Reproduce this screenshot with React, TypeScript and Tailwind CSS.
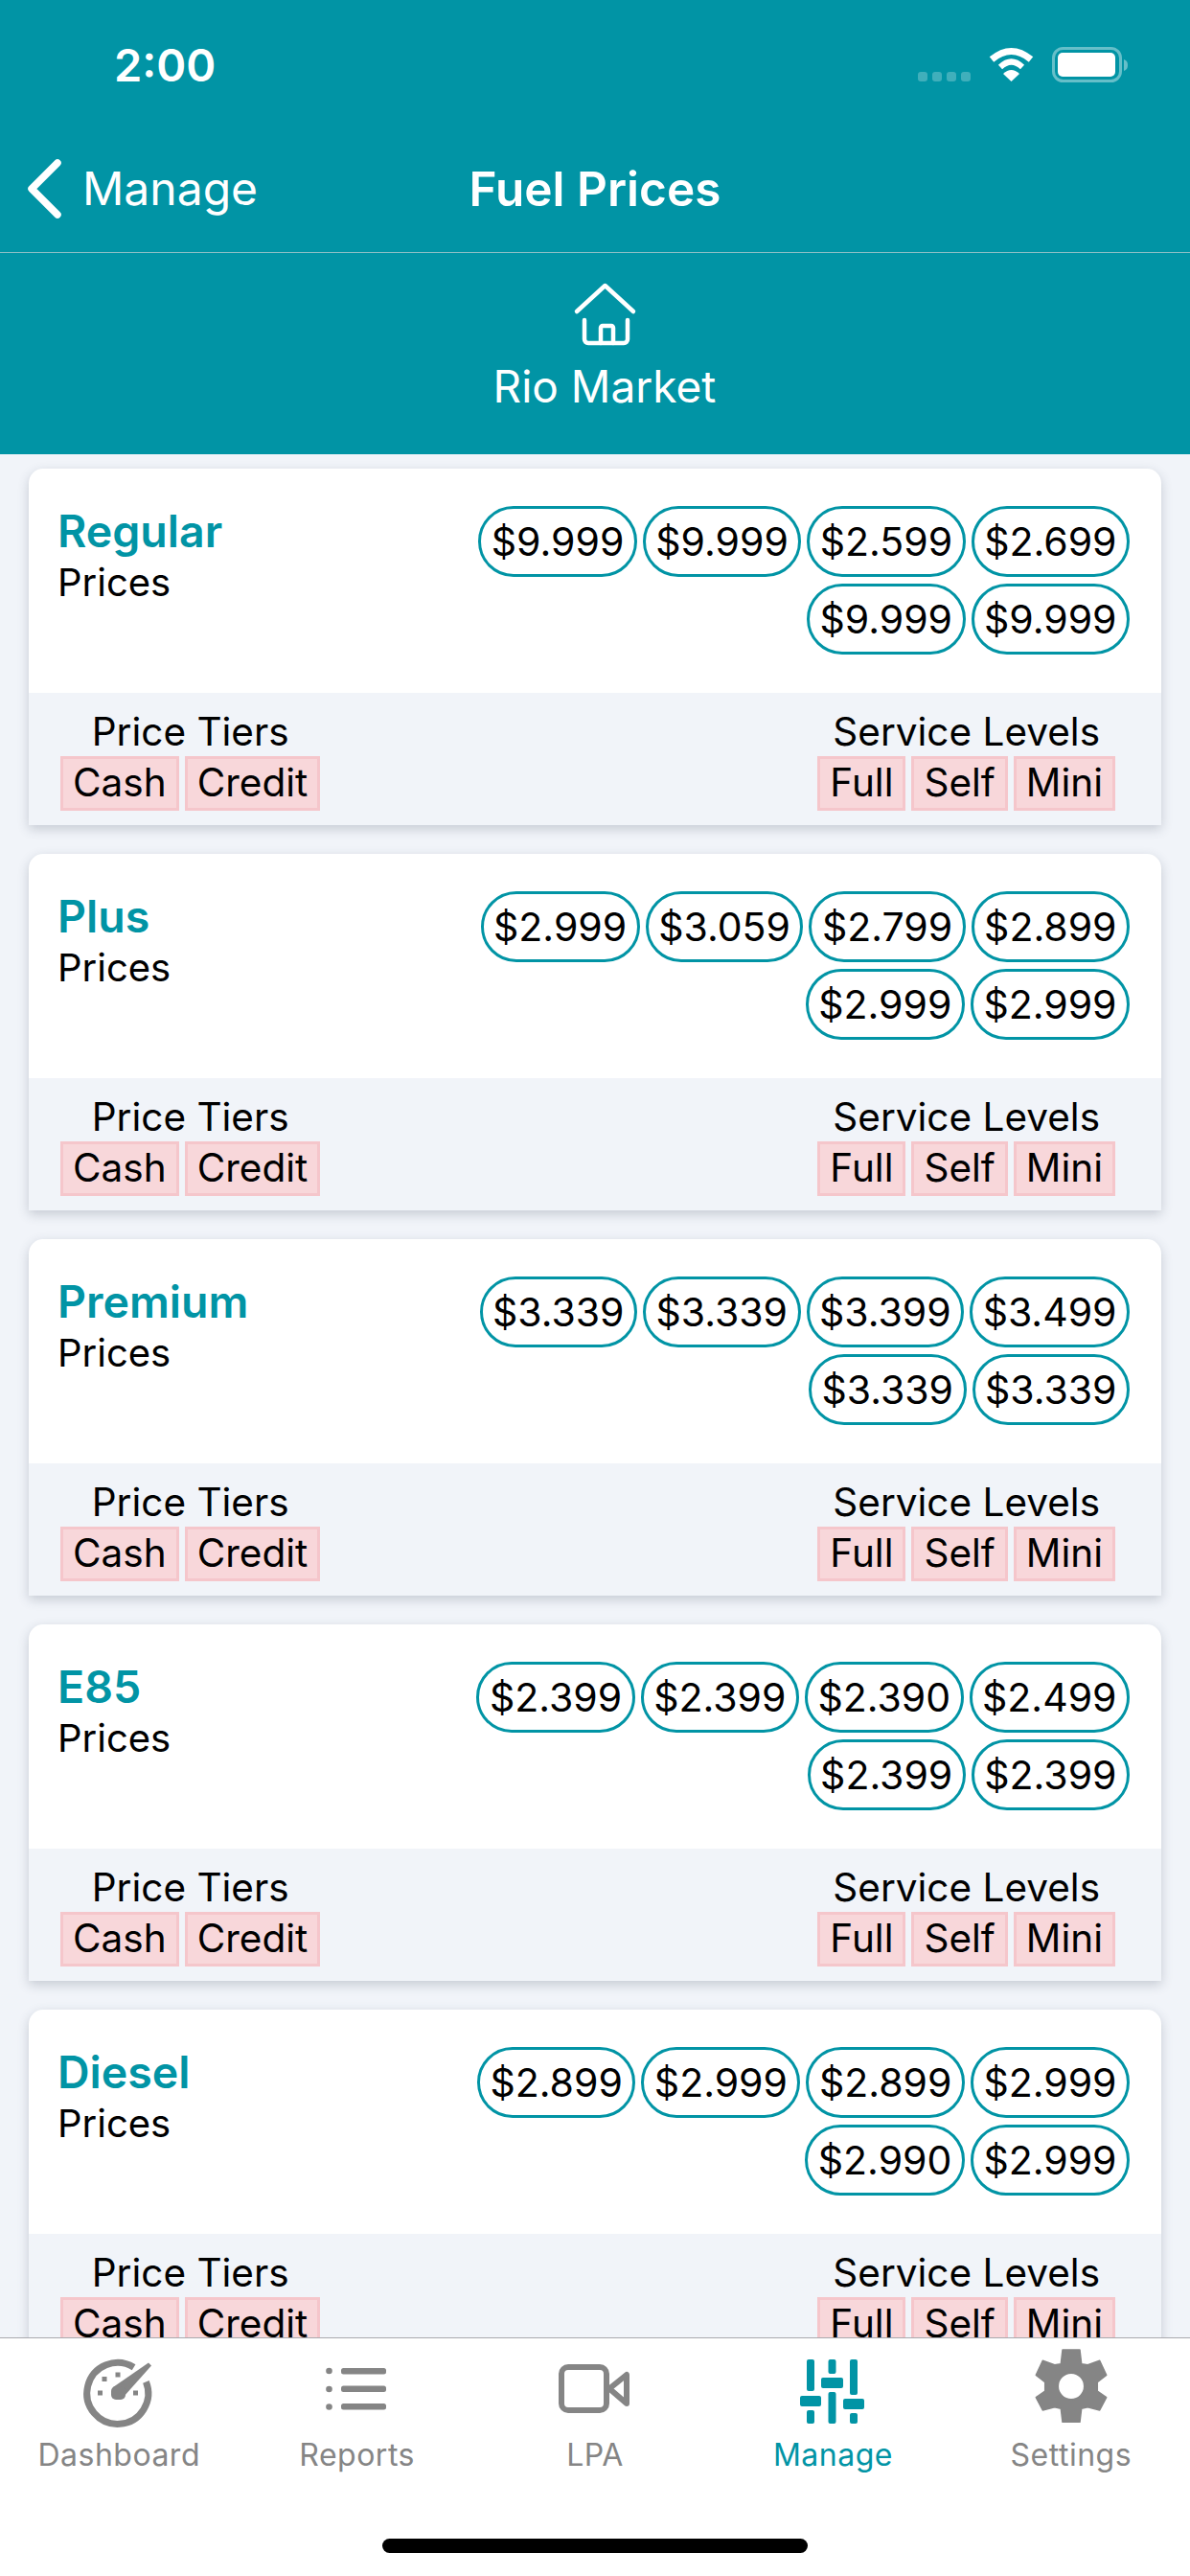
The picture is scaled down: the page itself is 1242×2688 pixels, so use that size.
import type { ReactNode } from "react";

function Pill({ v }: { v: string }) {
  return (
    <span className="h-[74px] rounded-[37px] border-[3px] border-[#0194a5] px-[10.5px] flex items-center justify-center text-[41px] text-black leading-none">
      {v}
    </span>
  );
}

function Chip({ t }: { t: string }) {
  return (
    <span className="h-[57px] border-[3px] border-[#f5c6cb] bg-[#f8d7da] px-[10px] flex items-center text-[40.5px] text-black leading-none">
      {t}
    </span>
  );
}

function Group({ title, items }: { title: string; items: string[] }) {
  return (
    <div className="flex flex-col items-center">
      <div className="text-[40.5px] leading-[50px] text-black">{title}</div>
      <div className="flex gap-[6px]">
        {items.map((i) => (
          <Chip key={i} t={i} />
        ))}
      </div>
    </div>
  );
}

function Card({ name, prices }: { name: string; prices: string[] }) {
  return (
    <div className="mx-[30px] mb-[30px] shrink-0 rounded-t-[15px] bg-white shadow-[0_4px_12px_rgba(60,70,90,0.24)] overflow-hidden">
      <div className="h-[234px] flex justify-between pl-[30px] pr-[33px]">
        <div className="pt-[40px]">
          <div className="text-[46.5px] leading-[50px] font-semibold text-[#0194a5]">{name}</div>
          <div className="text-[40px] leading-[50px] text-black mt-[4px]">Prices</div>
        </div>
        <div className="w-[690px] h-fit mt-[39px] flex flex-wrap justify-end gap-x-[6px] gap-y-[7px]">
          {prices.map((v, i) => (
            <Pill key={i} v={v} />
          ))}
        </div>
      </div>
      <div className="h-[138px] bg-[#f1f4f9] flex justify-between items-start pl-[33px] pr-[48px] pt-[16px]">
        <Group title="Price Tiers" items={["Cash", "Credit"]} />
        <Group title="Service Levels" items={["Full", "Self", "Mini"]} />
      </div>
    </div>
  );
}

const cards = [
  { name: "Regular", prices: ["$9.999", "$9.999", "$2.599", "$2.699", "$9.999", "$9.999"] },
  { name: "Plus", prices: ["$2.999", "$3.059", "$2.799", "$2.899", "$2.999", "$2.999"] },
  { name: "Premium", prices: ["$3.339", "$3.339", "$3.399", "$3.499", "$3.339", "$3.339"] },
  { name: "E85", prices: ["$2.399", "$2.399", "$2.390", "$2.499", "$2.399", "$2.399"] },
  { name: "Diesel", prices: ["$2.899", "$2.999", "$2.899", "$2.999", "$2.990", "$2.999"] },
];

function Tab({ label, active, children }: { label: string; active?: boolean; children: ReactNode }) {
  return (
    <div className="flex-1 flex flex-col items-center">
      <svg width="100" height="90" viewBox="0 0 100 90" className="shrink-0">
        {children}
      </svg>
      <div className={`text-[32px] leading-[40px] tracking-[0.5px] mt-[2px] ${active ? "text-[#0194a5]" : "text-[#858585]"}`}>{label}</div>
    </div>
  );
}

const half = "9,-38 10.7,-23.3 17.3,-22.3 29.7,-26.7 36.7,-11.7 27.3,-4.3 27.3,5 36.7,11.7 29.7,25 17.3,21.7 10.7,23.3 9,37.3 -9,37.3 -10.7,23.3 -17.3,21.7 -29.7,25 -36.7,11.7 -27.3,5 -27.3,-4.3 -36.7,-11.7 -29.7,-26.7 -17.3,-22.3 -10.7,-23.3 -9,-38";

export default function App() {
  return (
    <div className="w-[1242px] h-[2688px] flex flex-col bg-[#f1f4f9] overflow-hidden font-['Inter',sans-serif]">
      <header className="h-[474px] shrink-0 bg-[#0194a5] text-white flex flex-col">
        <div className="h-[132px] relative shrink-0">
          <span className="absolute left-[119px] top-[44px] text-[47px] leading-[48px] font-semibold">2:00</span>
          <svg className="absolute left-[950px] top-[40px]" width="235" height="55" viewBox="0 0 235 55">
            <g fill="#ffffff" fillOpacity="0.25">
              <rect x="8" y="35" width="10" height="10" rx="3" />
              <rect x="23" y="35" width="10" height="10" rx="3" />
              <rect x="38" y="35" width="10" height="10" rx="3" />
              <rect x="53" y="35" width="10" height="10" rx="3" />
            </g>
            <path d="M85 22Q105.5 5 126 22" stroke="#fff" strokeWidth="7" fill="none" />
            <path d="M94 30Q105.5 19 117 30" stroke="#fff" strokeWidth="6" fill="none" />
            <path d="M105.5 45L97 37Q105.5 29 114 37Z" fill="#fff" />
            <rect x="149.5" y="10.5" width="70" height="34" rx="10" stroke="#fff" strokeOpacity="0.4" strokeWidth="3" fill="none" />
            <rect x="154" y="15" width="60" height="25" rx="5" fill="#fff" />
            <path d="M223 22C226 23 227 25 227 28C227 31 226 33 223 34Z" fill="#fff" fillOpacity="0.4" />
          </svg>
        </div>
        <div className="h-[132px] shrink-0 relative flex items-center justify-center border-b border-[#8dbfc6]">
          <div className="absolute left-[26px] top-[33px] flex items-center">
            <svg width="40" height="64" viewBox="0 0 40 64">
              <path d="M34 5L7 32L34 59" stroke="#fff" strokeWidth="7.5" strokeLinecap="round" strokeLinejoin="round" fill="none" />
            </svg>
            <span className="ml-[20px] text-[48px] leading-[60px]">Manage</span>
          </div>
          <span className="text-[49.5px] leading-[60px] font-semibold mt-[-2px]">Fuel Prices</span>
        </div>
        <div className="flex flex-col items-center pt-[30px] pl-[20px]">
          <svg width="68" height="68" viewBox="0 0 68 68" fill="none" stroke="#fff" strokeWidth="4.5" strokeLinecap="round" strokeLinejoin="round">
            <path d="M5 31L34.5 4L64 31" />
            <path d="M13 40V60a4 4 0 0 0 4 4H54a4 4 0 0 0 4-4V40" />
            <path d="M30 64V48a2 2 0 0 1 2-2H41a2 2 0 0 1 2 2V64" />
          </svg>
          <span className="text-[46px] leading-[54px] mt-[14px]">Rio Market</span>
        </div>
      </header>

      <main className="flex-1 min-h-0 overflow-hidden pt-[15px] flex flex-col">
        {cards.map((c) => (
          <Card key={c.name} {...c} />
        ))}
      </main>

      <nav className="h-[249px] shrink-0 bg-white border-t border-[#a9a9ae] relative">
        <div className="flex pt-[10px]">
          <Tab label="Dashboard">
            <g transform="translate(11 10)" fill="#858585">
              <path d="M54.6 10.2A32 32 0 1 0 67.4 25.4" stroke="#858585" strokeWidth="7" fill="none" />
              <polygon points="33,31 70,5.5 73,8.5 44,41" />
              <rect x="31" y="30" width="15" height="14" rx="5" />
              <rect x="21.5" y="20" width="5" height="5" />
              <rect x="35.5" y="15.5" width="5" height="5" />
              <rect x="17" y="34.5" width="5" height="5" />
              <rect x="54" y="34.5" width="5" height="5" />
            </g>
          </Tab>
          <Tab label="Reports">
            <g fill="#858585">
              <circle cx="20.5" cy="24" r="3.3" /><circle cx="20.5" cy="43" r="3.3" /><circle cx="20.5" cy="61.5" r="3.3" />
              <rect x="33" y="21" width="47" height="6.5" rx="2.5" /><rect x="33" y="39.5" width="47" height="6.5" rx="2.5" /><rect x="33" y="58" width="47" height="6.5" rx="2.5" />
            </g>
          </Tab>
          <Tab label="LPA">
            <g fill="none" stroke="#858585" strokeWidth="6">
              <rect x="15" y="20" width="47" height="45" rx="7" />
              <path d="M65 42.5L83 28V58Z" strokeLinejoin="round" />
            </g>
          </Tab>
          <Tab label="Manage" active>
            <g fill="#0194a5">
              <rect x="23" y="12" width="8" height="33" rx="2" /><rect x="23" y="65" width="8" height="14" rx="2" />
              <rect x="16" y="50" width="22" height="11" rx="2" />
              <rect x="45.5" y="12" width="8" height="15" rx="2" /><rect x="45.5" y="46" width="8" height="33" rx="2" />
              <rect x="38" y="31" width="23" height="11" rx="2" />
              <rect x="68" y="12" width="8" height="37" rx="2" /><rect x="68" y="68" width="8" height="11" rx="2" />
              <rect x="61" y="53" width="22" height="11" rx="2" />
            </g>
          </Tab>
          <Tab label="Settings">
            <g transform="translate(50 40)">
              <path
                d={`M${half.split(" ").join("L")}Z M13.7 0A13.7 13.7 0 1 0 -13.7 0A13.7 13.7 0 1 0 13.7 0Z`}
                fill="#858585"
                fillRule="evenodd"
                stroke="#858585"
                strokeWidth="1.5"
                strokeLinejoin="round"
              />
            </g>
          </Tab>
        </div>
        <div className="absolute left-[399px] top-[209px] w-[444px] h-[15px] rounded-full bg-black" />
      </nav>
    </div>
  );
}
